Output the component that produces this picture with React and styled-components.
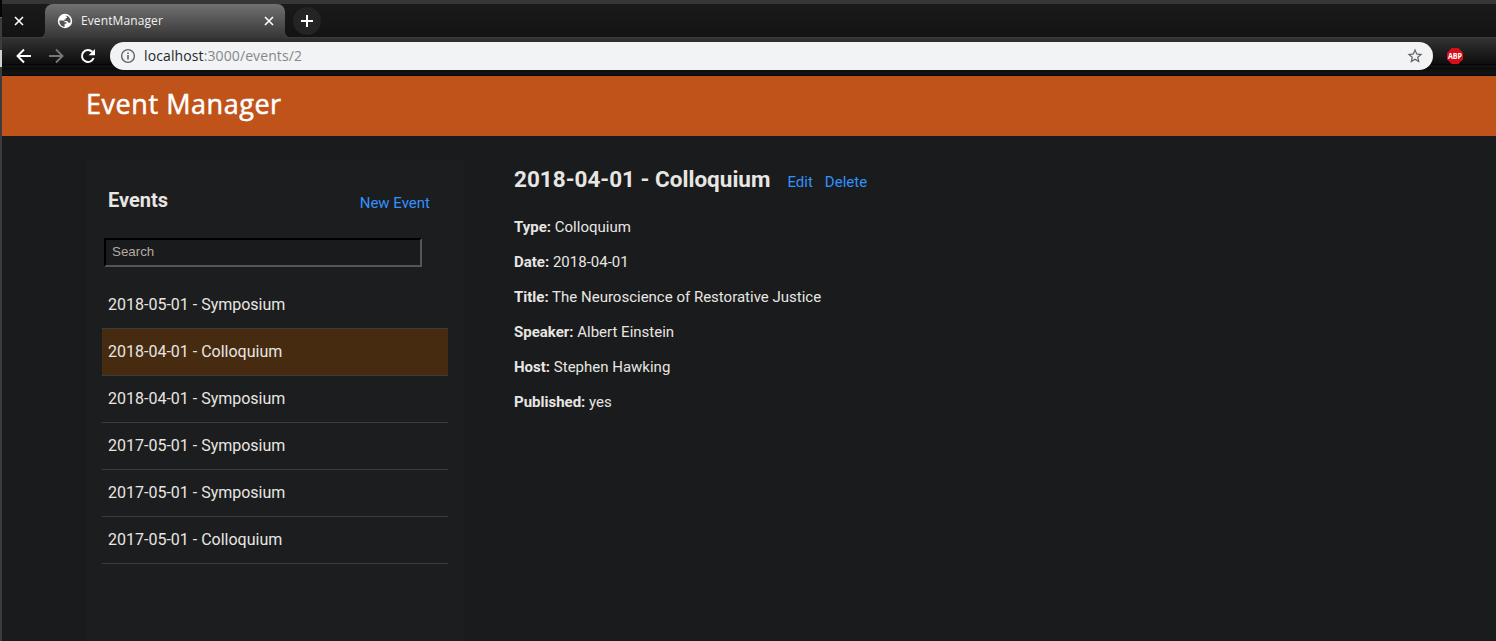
import React from "react";
import styled, { createGlobalStyle } from "styled-components";

const Global = createGlobalStyle`
  *, *::before, *::after { box-sizing: border-box; }
  html, body { margin: 0; padding: 0; overflow: hidden; background: #1a1b1c; }
  body { font-family: Roboto, "Liberation Sans", sans-serif; color: #e8e6e3; }
`;

const Desktop = styled.div`
  display: flex;
  width: 100vw;
  height: 100vh;
`;

const DesktopEdge = styled.div`
  flex: 0 0 2px;
  display: flex;
  flex-direction: column;
`;

const EdgePiece = styled.div`
  flex: ${(p) => (p.$height ? `0 0 ${p.$height}px` : "1")};
  background: ${(p) => p.$color};
`;

const Window = styled.div`
  flex: 1;
  min-width: 0;
  display: flex;
  flex-direction: column;
`;

const TitleStrip = styled.div`
  height: 4px;
  flex: none;
  background: #363636;
`;

const TabStrip = styled.div`
  height: 34px;
  flex: none;
  display: flex;
  background: linear-gradient(#1a1a1a, #131313);
  border-bottom: 1px solid #3a3a3a;
`;

const IconButton = styled.button`
  display: grid;
  place-items: center;
  width: ${(p) => p.$size}px;
  height: ${(p) => p.$size}px;
  padding: 0;
  border: 0;
  border-radius: 50%;
  background: ${(p) => p.$fill || "transparent"};
  color: ${(p) => p.$color || "#fff"};
  svg { display: block; }
`;

const PreviousTab = styled.div`
  width: 43px;
  display: flex;
  align-items: center;
  padding: 1px 0 0 9px;
`;

const ActiveTab = styled.div`
  position: relative;
  width: 240px;
  height: 34px;
  display: flex;
  align-items: center;
  padding: 0 8px 0 12px;
  border-radius: 8px 8px 0 0;
  background: linear-gradient(#717171, #363636);

  &::before, &::after {
    content: "";
    position: absolute;
    bottom: 0;
    width: 6px;
    height: 6px;
  }
  &::before {
    right: 100%;
    background: radial-gradient(circle at 0 0, transparent 5.5px, #3d3d3d 6px);
  }
  &::after {
    left: 100%;
    background: radial-gradient(circle at 100% 0, transparent 5.5px, #3d3d3d 6px);
  }
`;

const TabTitle = styled.span`
  flex: 1;
  margin-left: 8px;
  font: 12px/16px "Open Sans", "Noto Sans", sans-serif;
  letter-spacing: 0.1px;
  color: #f1f1f1;
`;

const NewTabSlot = styled.div`
  display: flex;
  align-items: center;
  padding: 1px 0 0 8px;
`;

const Toolbar = styled.div`
  height: 38px;
  flex: none;
  display: flex;
  align-items: center;
  padding: 0 33px 2px 12px;
  background: linear-gradient(#333 0, #0d0d0d 26px, #000 27px, #1c1c1c 28px, #0b0b0b 29px, #141414 36px, #060606 38px);
`;

const NavButtons = styled.div`
  display: flex;
  gap: 12px;
  width: 96px;
`;

const AddressBar = styled.div`
  flex: 1;
  height: 28px;
  display: flex;
  align-items: center;
  padding: 0 9px 0 10px;
  border-radius: 14px;
  background: #f1f3f4;
  color: #5f6368;
`;

const Address = styled.div`
  flex: 1;
  margin-left: 8px;
  font: 14px/20px "Open Sans", "Noto Sans", sans-serif;
  letter-spacing: 0.11px;
  color: #84888c;
`;

const Host = styled.span`
  color: #26282b;
`;

const Extension = styled.div`
  margin-left: 14px;
  svg { display: block; }
`;

const Header = styled.header`
  height: 60px;
  flex: none;
  padding: 9px 0 0 84px;
  background: #bf531a;
`;

const Brand = styled.h1`
  margin: 0;
  font: 500 27px/38px "Open Sans", sans-serif;
  letter-spacing: 0.55px;
  -webkit-text-stroke: 0.5px #fff;
  color: #fff;
`;

const Page = styled.main`
  flex: 1;
  min-height: 0;
  display: flex;
  gap: 50px;
  padding: 24px 0 0 84px;
  background: #1a1b1c;
`;

const Sidebar = styled.aside`
  width: 378px;
  padding: 0 16px;
  background: #1c1d1e;
`;

const SidebarHead = styled.div`
  display: flex;
  justify-content: space-between;
  align-items: flex-start;
  padding: 28px 18px 0 6px;
  height: 78px;
`;

const SidebarTitle = styled.h2`
  margin: 0;
  font-size: 20px;
  line-height: 24px;
  font-weight: 700;
`;

const Link = styled.a`
  font-size: 15px;
  line-height: 20px;
  color: #3391ff;
  text-decoration: none;
`;

const NewLink = styled(Link)`
  padding-top: 5px;
`;

const Search = styled.input`
  display: block;
  width: 318px;
  height: 29px;
  margin: 0 0 14px 2px;
  padding: 1px 6px 3px;
  border: 2px solid;
  border-color: #000 #555 #555 #000;
  outline: 0;
  background: #1a1b1c;
  color: #e8e6e3;
  font: 13.333px "Liberation Sans", Arial, sans-serif;
  &::placeholder { color: #b2aca2; opacity: 1; }
`;

const EventList = styled.ul`
  margin: 0;
  padding: 0;
  list-style: none;
`;

const EventItem = styled.li`
  height: ${(p) => (p.$first ? 48 : 47)}px;
  padding: ${(p) => (p.$first ? 14 : 13)}px 6px 0;
  border-bottom: 1px solid #3a3c3d;
  background: ${(p) => (p.$active ? "#462b10" : "transparent")};
  font-size: 16px;
  line-height: 20px;
`;

const Details = styled.section`
  padding-top: 5px;
`;

const DetailsHead = styled.div`
  display: flex;
  align-items: baseline;
  gap: 12px;
  margin-bottom: 24px;
`;

const DetailsTitle = styled.h2`
  margin: 0 5px 0 0;
  font-size: 22.5px;
  line-height: 28px;
  font-weight: 700;
`;

const Field = styled.p`
  margin: 0 0 15px;
  font-size: 15px;
  line-height: 20px;
`;

const CloseIcon = () => (
  <svg width="12" height="12" viewBox="0 0 12 12" stroke="currentColor" strokeWidth="1.6" fill="none">
    <path d="M2 2l8 8M10 2l-8 8" />
  </svg>
);

const GlobeIcon = () => (
  <svg width="16" height="16" viewBox="0 0 16 16">
    <circle cx="8" cy="8" r="7.2" fill="#fff" />
    <path d="M2.4 7.400H6C7.200 7.400 7.600 8.200 7.600 9.200H9.400V10.700H7.600V13.700C4.400 13.700 2.200 11 2.400 7.400zM9.200 2.500C11.700 3 13.600 5.200 13.600 8c0 .6-.1 1.200-.3 1.700H11.700C10.900 9.700 10.800 8.500 10.200 8H7.300V6.500h1.400V4.900h1.500C9.900 4 9.200 3.500 9.200 2.500z" fill="#555" />
  </svg>
);

const PlusIcon = () => (
  <svg width="14" height="14" viewBox="0 0 14 14" stroke="currentColor" strokeWidth="2">
    <path d="M7 1v12M1 7h12" />
  </svg>
);

const ArrowIcon = ({ forward }) => (
  <svg width="20" height="20" viewBox="0 0 20 20" stroke="currentColor" strokeWidth="1.9" fill="none">
    <path d={forward ? "M3 10h13.500M10 3.500l6.500 6.500-6.500 6.500" : "M17 10H3.500M10 3.500L3.500 10l6.500 6.500"} />
  </svg>
);

const ReloadIcon = () => (
  <svg width="20" height="20" viewBox="0 0 20 20">
    <path d="M15.600 12A6 6 0 1 1 14.300 5.800" stroke="currentColor" strokeWidth="2" fill="none" />
    <path d="M17 2.900v6.400h-6.400z" fill="currentColor" />
  </svg>
);

const InfoIcon = () => (
  <svg width="16" height="16" viewBox="0 0 16 16">
    <circle cx="8" cy="8" r="6.400" fill="none" stroke="currentColor" strokeWidth="1.400" />
    <path d="M7.200 7h1.600v4.500H7.200zM7.200 4.400h1.600v1.500H7.200z" fill="currentColor" />
  </svg>
);

const StarIcon = () => (
  <svg width="18" height="18" viewBox="0 0 24 24">
    <path fill="currentColor" d="M22 9.240l-7.190-.62L12 2 9.190 8.630 2 9.240l5.460 4.730L5.820 21 12 17.270 18.180 21l-1.630-7.030L22 9.240zM12 15.400l-3.760 2.270 1-4.280-3.320-2.880 4.380-.38L12 6.100l1.710 4.040 4.380.38-3.320 2.880 1 4.280L12 15.400z" />
  </svg>
);

const AbpIcon = () => (
  <svg width="16" height="16" viewBox="0 0 16 16">
    <path d="M4.700 0h6.600L16 4.700v6.600L11.300 16H4.700L0 11.300V4.700z" fill="#d5101b" />
    <text x="8" y="10.900" textAnchor="middle" textLength="14" lengthAdjust="spacingAndGlyphs" fontFamily="Open Sans, sans-serif" fontWeight="700" fontSize="8.2" fill="#fff">ABP</text>
  </svg>
);

const events = [
  "2018-05-01 - Symposium",
  "2018-04-01 - Colloquium",
  "2018-04-01 - Symposium",
  "2017-05-01 - Symposium",
  "2017-05-01 - Symposium",
  "2017-05-01 - Colloquium",
];

const fields = [
  ["Type", "Colloquium"],
  ["Date", "2018-04-01"],
  ["Title", "The Neuroscience of Restorative Justice"],
  ["Speaker", "Albert Einstein"],
  ["Host", "Stephen Hawking"],
  ["Published", "yes"],
];

export default function App() {
  return (
    <Desktop>
      <Global />
      <DesktopEdge>
        <EdgePiece $height={17} $color="#050505" />
        <EdgePiece $height={1} $color="#3f6f94" />
        <EdgePiece $height={32} $color="#3c3c3c" />
        <EdgePiece $height={17} $color="#d0d0d0" />
        <EdgePiece $color="#3c3c3c" />
      </DesktopEdge>
      <Window>
        <TitleStrip />
        <TabStrip>
          <PreviousTab>
            <IconButton $size={16} aria-label="Close tab"><CloseIcon /></IconButton>
          </PreviousTab>
          <ActiveTab>
            <GlobeIcon />
            <TabTitle>EventManager</TabTitle>
            <IconButton $size={16} aria-label="Close tab"><CloseIcon /></IconButton>
          </ActiveTab>
          <NewTabSlot>
            <IconButton $size={28} $fill="#242424" aria-label="New tab"><PlusIcon /></IconButton>
          </NewTabSlot>
        </TabStrip>
        <Toolbar>
          <NavButtons>
            <IconButton $size={20} aria-label="Back"><ArrowIcon /></IconButton>
            <IconButton $size={20} $color="#777" aria-label="Forward"><ArrowIcon forward /></IconButton>
            <IconButton $size={20} aria-label="Reload"><ReloadIcon /></IconButton>
          </NavButtons>
          <AddressBar>
            <InfoIcon />
            <Address><Host>localhost</Host>:3000/events/2</Address>
            <StarIcon />
          </AddressBar>
          <Extension><AbpIcon /></Extension>
        </Toolbar>
        <Header><Brand>Event Manager</Brand></Header>
        <Page>
          <Sidebar>
            <SidebarHead>
              <SidebarTitle>Events</SidebarTitle>
              <NewLink>New Event</NewLink>
            </SidebarHead>
            <Search placeholder="Search" />
            <EventList>
              {events.map((name, i) => (
                <EventItem key={i} $first={i === 0} $active={i === 1}>{name}</EventItem>
              ))}
            </EventList>
          </Sidebar>
          <Details>
            <DetailsHead>
              <DetailsTitle>2018-04-01 - Colloquium</DetailsTitle>
              <Link>Edit</Link>
              <Link>Delete</Link>
            </DetailsHead>
            {fields.map(([label, value]) => (
              <Field key={label}><strong>{label}:</strong> {value}</Field>
            ))}
          </Details>
        </Page>
      </Window>
    </Desktop>
  );
}
